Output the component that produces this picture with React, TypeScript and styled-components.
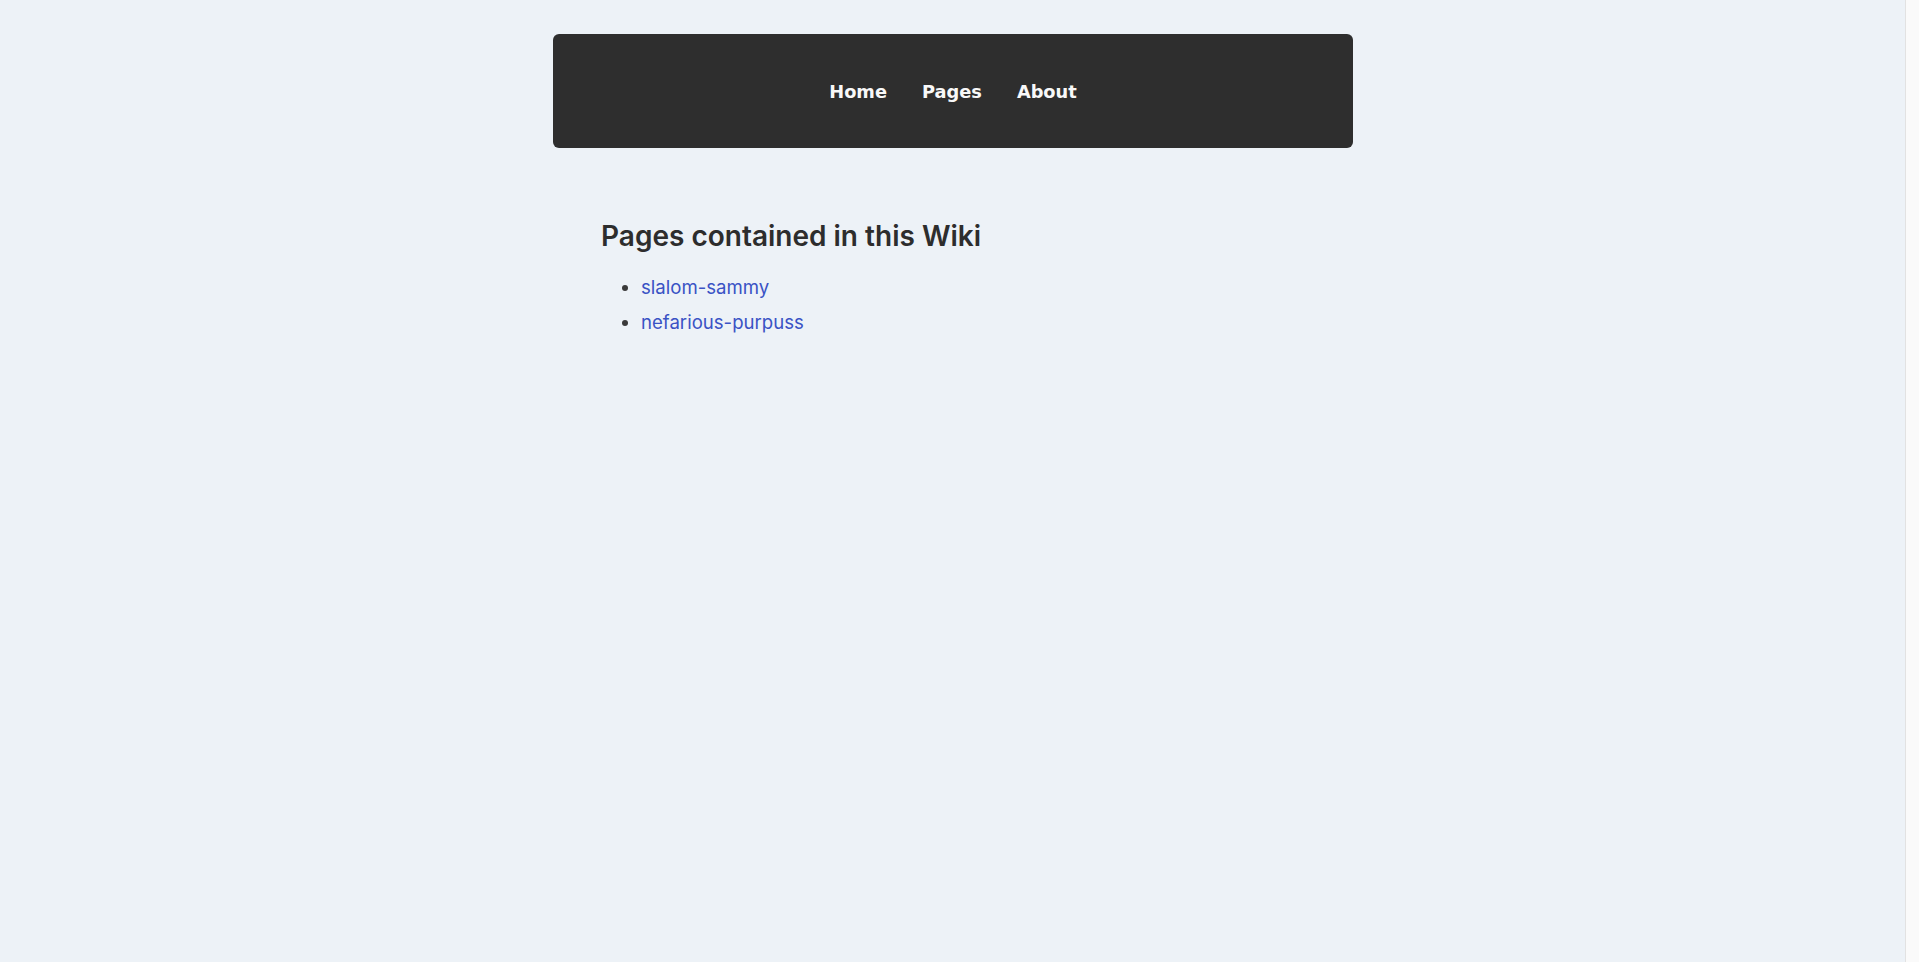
import React, { ReactElement } from 'react'
import styled, { createGlobalStyle } from 'styled-components'

const GlobalStyle = createGlobalStyle`
  body {
    margin: 0;
    padding-right: 13px;
    background-color: #edf2f7;
    font-family: Inter, 'Noto Sans', sans-serif;
    color: #2b2b2b;
  }
`

// stands in for the browser's empty vertical scrollbar track
const ScrollTrack = styled.div`
  position: fixed;
  top: 0;
  right: 0;
  bottom: 0;
  width: 13px;
  background-color: #fafafa;
  border-left: 1px solid #e2e2e2;
`

const Page = styled.div`
  width: 800px;
  margin: 0 auto;
  padding-top: 34px;
`

const NavBar = styled.nav`
  display: flex;
  justify-content: center;
  align-items: center;
  gap: 35px;
  height: 114px;
  background-color: #2e2e2e;
  border-radius: 6px;
`

const NavLink = styled.a`
  font-family: 'DejaVu Sans', Verdana, sans-serif;
  font-weight: 700;
  font-size: 17.8px;
  color: #f8f8f8;
  text-decoration: none;
  cursor: pointer;
`

const Main = styled.main`
  padding: 71px 48px;
`

const Heading = styled.h2`
  margin: 0 0 23px;
  font-size: 28px;
  font-weight: 600;
  color: #2d2d2d;
`

const PageList = styled.ul`
  margin: 0;
  padding-left: 40px;
`

const PageItem = styled.li`
  font-size: 18.6px;
  margin-bottom: 13px;
  color: #3a3a3a;
`

const PageLink = styled.a`
  color: #3a53c5;
  text-decoration: none;
`

const pages = ['slalom-sammy', 'nefarious-purpuss']

const App = (): ReactElement => (
  <>
    <GlobalStyle />
    <Page>
      <NavBar>
        <NavLink>Home</NavLink>
        <NavLink>Pages</NavLink>
        <NavLink>About</NavLink>
      </NavBar>
      <Main>
        <Heading>Pages contained in this Wiki</Heading>
        <PageList>
          {pages.map((p) => (
            <PageItem key={p}>
              <PageLink href={`#${p}`}>{p}</PageLink>
            </PageItem>
          ))}
        </PageList>
      </Main>
    </Page>
    <ScrollTrack />
  </>
)

export default App
